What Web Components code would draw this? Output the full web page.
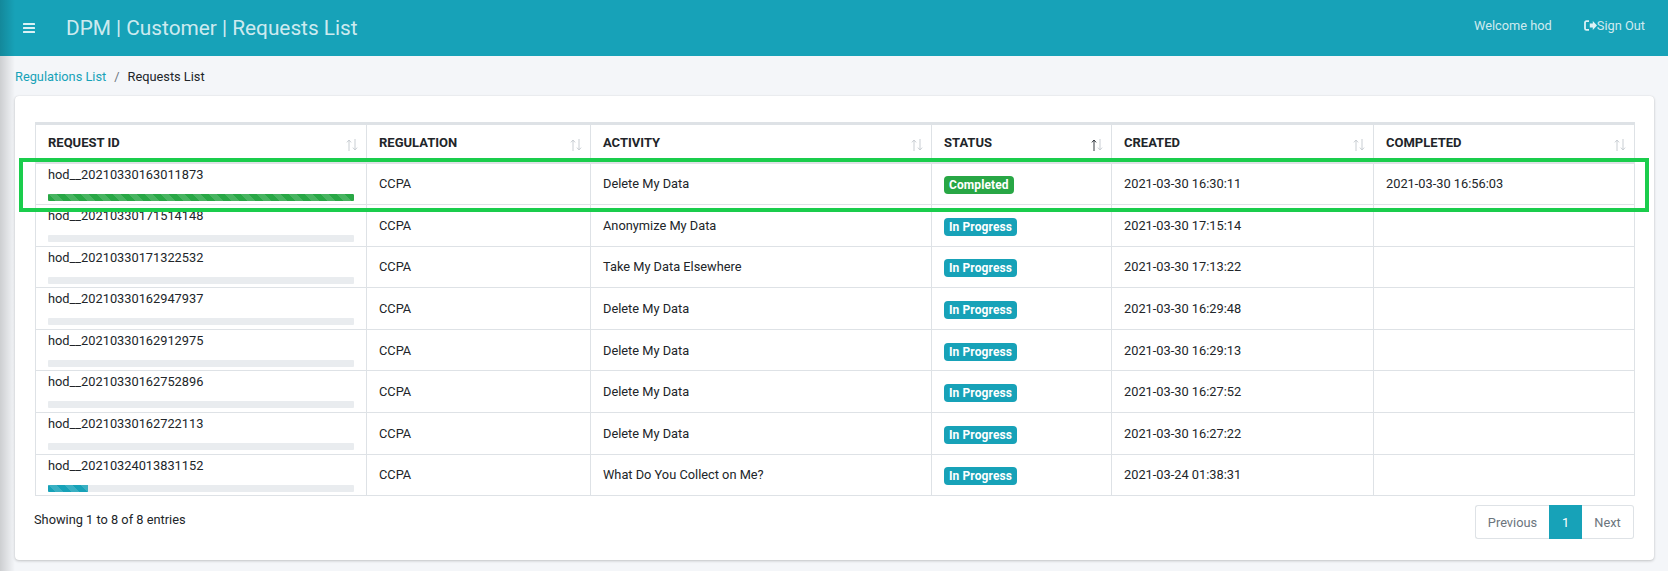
<!DOCTYPE html>
<html>
<head>
<meta charset="utf-8">
<title>DPM | Customer | Requests List</title>
<style>
html, body { margin: 0; padding: 0; height: 100%; }
body { font-family: Roboto, "Liberation Sans", sans-serif; font-size: 12.8px; color: #212529; background: #f4f6f9; overflow: hidden; }
</style>
</head>
<body>
<dpm-page>
    <dpm-header slot="header" title="DPM | Customer | Requests List" user="hod"></dpm-header>
    <dpm-breadcrumb slot="crumbs" link="Regulations List" current="Requests List"></dpm-breadcrumb>
    <dpm-requests slot="content"></dpm-requests>
</dpm-page>

<script>
const rows = [
    ["hod__20210330163011873", "CCPA", "Delete My Data", "Completed", "2021-03-30 16:30:11", "2021-03-30 16:56:03", 100],
    ["hod__20210330171514148", "CCPA", "Anonymize My Data", "In Progress", "2021-03-30 17:15:14", "", 0],
    ["hod__20210330171322532", "CCPA", "Take My Data Elsewhere", "In Progress", "2021-03-30 17:13:22", "", 0],
    ["hod__20210330162947937", "CCPA", "Delete My Data", "In Progress", "2021-03-30 16:29:48", "", 0],
    ["hod__20210330162912975", "CCPA", "Delete My Data", "In Progress", "2021-03-30 16:29:13", "", 0],
    ["hod__20210330162752896", "CCPA", "Delete My Data", "In Progress", "2021-03-30 16:27:52", "", 0],
    ["hod__20210330162722113", "CCPA", "Delete My Data", "In Progress", "2021-03-30 16:27:22", "", 0],
    ["hod__20210324013831152", "CCPA", "What Do You Collect on Me?", "In Progress", "2021-03-24 01:38:31", "", 13]
];

class DpmPage extends HTMLElement {
    constructor() {
        super();
        this.attachShadow({mode:"open"});
        this.shadowRoot.innerHTML = `
        <style>
            :host { display: block; height: 571px; position: relative; overflow: hidden; }
            .crumbs { padding: 13px 15px 0; height: 27px; }
            .content { padding: 0 14px 0 15px; }
            .edge { position: absolute; left: 0; top: 0; bottom: 0; width: 15px; pointer-events: none;
                background: linear-gradient(to right, rgba(0,0,0,.16), rgba(0,0,0,0)); }
        </style>
        <slot name="header"></slot>
        <div class="crumbs"><slot name="crumbs"></slot></div>
        <div class="content"><slot name="content"></slot></div>
        <div class="edge"></div>`;
    }
}

class DpmHeader extends HTMLElement {
    constructor() {
        super();
        this.attachShadow({mode:"open"});
    }
    connectedCallback() {
        this.shadowRoot.innerHTML = `
        <style>
            :host { display: flex; align-items: center; height: 56px; background: #17a2b8; color: rgba(255,255,255,.8); }
            .burger { display: flex; margin-left: 23px; width: 13px; }
            h1 { margin: 0 0 0 30px; font-size: 20.8px; font-weight: 400; flex: 1; }
            .right { display: flex; align-items: center; font-size: 12.8px; padding-right: 23px; position: relative; top: -3px; }
            .welcome { margin-right: 32px; }
            .out { display: flex; align-items: center; }
            svg { display: block; }
        </style>
        <span class="burger">
            <svg width="13" height="12" viewBox="0 0 13 12" fill="#fff" fill-opacity=".85"><rect y="1" width="12" height="2" rx=".5"/><rect y="5" width="12" height="2" rx=".5"/><rect y="9" width="12" height="2" rx=".5"/></svg>
        </span>
        <h1>${this.getAttribute("title")}</h1>
        <div class="right">
            <span class="welcome">Welcome ${this.getAttribute("user")}</span>
            <span class="out">
                <svg width="13" height="11" viewBox="0 0 13 11" fill="none"><path d="M5 1.2H2.4C1.600 1.2 1 1.800 1 2.600v5.800c0 .8.6 1.400 1.400 1.400H5" stroke="#fff" stroke-opacity=".85" stroke-width="1.800"/><path d="M5.800 3.400h3V1L13 5.500 8.800 10V7.600h-3z" fill="#fff" fill-opacity=".85"/></svg>
                Sign Out
            </span>
        </div>`;
    }
}

class DpmBreadcrumb extends HTMLElement {
    constructor() {
        super();
        this.attachShadow({mode:"open"});
    }
    connectedCallback() {
        this.shadowRoot.innerHTML = `
        <style>
            :host { display: block; font-size: 12.8px; line-height: 15px; color: #212529; }
            a { color: #17a2b8; text-decoration: none; }
            i { font-style: normal; color: #6c757d; padding: 0 8px; }
        </style>
        <a href="#">${this.getAttribute("link")}</a><i>/</i>${this.getAttribute("current")}`;
    }
}

class DpmProgress extends HTMLElement {
    constructor() {
        super();
        this.attachShadow({mode:"open"});
    }
    connectedCallback() {
        let value = Number(this.getAttribute("value"));
        let color = this.getAttribute("color");
        this.shadowRoot.innerHTML = `
        <style>
            :host { display: block; height: 7px; background: #e9ecef; border-radius: 1px; overflow: hidden; }
            div { height: 100%; background-color: ${color};
                background-image: linear-gradient(45deg, rgba(255,255,255,.15) 25%, transparent 25%, transparent 50%, rgba(255,255,255,.15) 50%, rgba(255,255,255,.15) 75%, transparent 75%, transparent);
                background-size: 16px 16px; }
        </style>
        <div style="width:${value}%"></div>`;
    }
}

class DpmBadge extends HTMLElement {
    constructor() {
        super();
        this.attachShadow({mode:"open"});
        this.shadowRoot.innerHTML = `
        <style>
            :host { display: inline-block; padding: 3px 5px; margin-top: 3px; border-radius: 4px; color: #fff; font-size: 12px; line-height: 12px; font-weight: 700; letter-spacing: .1px; background: #17a2b8; vertical-align: middle; }
            :host([kind="done"]) { background: #28a745; }
        </style>
        <slot></slot>`;
    }
}

class DpmPager extends HTMLElement {
    constructor() {
        super();
        this.attachShadow({mode:"open"});
        this.shadowRoot.innerHTML = `
        <style>
            :host { display: flex; height: 34px; font-size: 12.8px; color: #6c757d; }
            span { display: flex; align-items: center; justify-content: center; box-sizing: border-box; border: 1px solid #dee2e6; background: #fff; }
            .prev { width: 74px; border-radius: 3px 0 0 3px; border-right: 0; }
            .next { width: 52px; border-radius: 0 3px 3px 0; border-left: 0; }
            .cur { width: 33px; background: #17a2b8; border-color: #17a2b8; color: #fff; }
        </style>
        <span class="prev">Previous</span><span class="cur">1</span><span class="next">Next</span>`;
    }
}

class DpmRequests extends HTMLElement {
    constructor() {
        super();
        this.attachShadow({mode:"open"});
    }
    connectedCallback() {
        let heads = ["REQUEST ID", "REGULATION", "ACTIVITY", "STATUS", "CREATED", "COMPLETED"];
        let sort = `<svg class="sort" width="12" height="12" viewBox="0 0 12 12" fill="none" stroke="#c9ced3" stroke-width="1"><path d="M3 12V1M.9 3.4 3 1l2.100 2.400M9 0v11M6.900 8.600 9 11l2.100-2.400"/></svg>`;
        let sortOn = sort.replace('<path d="M3 12V1M.9 3.4 3 1l2.100 2.400', '<path stroke="#343a40" d="M3 12V1M.9 3.4 3 1l2.100 2.400"/><path d="');
        let head = heads.map(h => `<th>${h}${h == "STATUS" ? sortOn : sort}</th>`).join("");
        let body = rows.map(r => {
            let done = r[3] == "Completed";
            return `<tr>
                <td class="id"><div>${r[0]}</div><dpm-progress value="${r[6]}" color="${done ? "#28a745" : "#17a2b8"}"></dpm-progress></td>
                <td>${r[1]}</td>
                <td>${r[2]}</td>
                <td><dpm-badge kind="${done ? "done" : "run"}">${r[3]}</dpm-badge></td>
                <td>${r[4]}</td>
                <td>${r[5]}</td>
            </tr>`;
        }).join("");
        this.shadowRoot.innerHTML = `
        <style>
            :host { display: block; box-sizing: border-box; height: 464px; background: #fff; border-radius: 4px; box-shadow: 0 0 1px rgba(0,0,0,.13), 0 1px 3px rgba(0,0,0,.2); padding: 26px 20px 0 20px; position: relative; }
            table { border-collapse: collapse; table-layout: fixed; width: 1599px; color: #212529; }
            th, td { border: 1px solid #dee2e6; padding: 0 12px; text-align: left; font-weight: 400; height: 41.6px; box-sizing: border-box; vertical-align: middle; }
            thead th { border-top: 3px solid #dee2e6; border-bottom: 2px solid #dee2e6; font-weight: 700; font-size: 13px; height: 39.4px; padding-bottom: 2px; position: relative; }
            .sort { position: absolute; right: 8px; top: 14px; }
            td.id { vertical-align: top; padding-top: 2px; }
            td.id div { line-height: 17px; margin-bottom: 11px; }
            .foot { display: flex; justify-content: space-between; align-items: flex-start; padding-top: 9px; }
            .info { padding-top: 7px; margin-left: -1px; }
            .mark { position: absolute; left: 4px; top: 62px; width: 1630px; height: 54px; box-sizing: border-box; border: 4px solid #1acd4c; pointer-events: none; }
        </style>
        <table>
            <colgroup><col style="width:331px"><col style="width:224px"><col style="width:341px"><col style="width:180px"><col style="width:262px"><col style="width:261px"></colgroup>
            <thead><tr>${head}</tr></thead>
            <tbody>${body}</tbody>
        </table>
        <div class="foot">
            <div class="info">Showing 1 to 8 of 8 entries</div>
            <dpm-pager></dpm-pager>
        </div>
        <div class="mark"></div>`;
    }
}

customElements.define("dpm-page", DpmPage);
customElements.define("dpm-header", DpmHeader);
customElements.define("dpm-breadcrumb", DpmBreadcrumb);
customElements.define("dpm-progress", DpmProgress);
customElements.define("dpm-badge", DpmBadge);
customElements.define("dpm-pager", DpmPager);
customElements.define("dpm-requests", DpmRequests);
</script>
</body>
</html>
